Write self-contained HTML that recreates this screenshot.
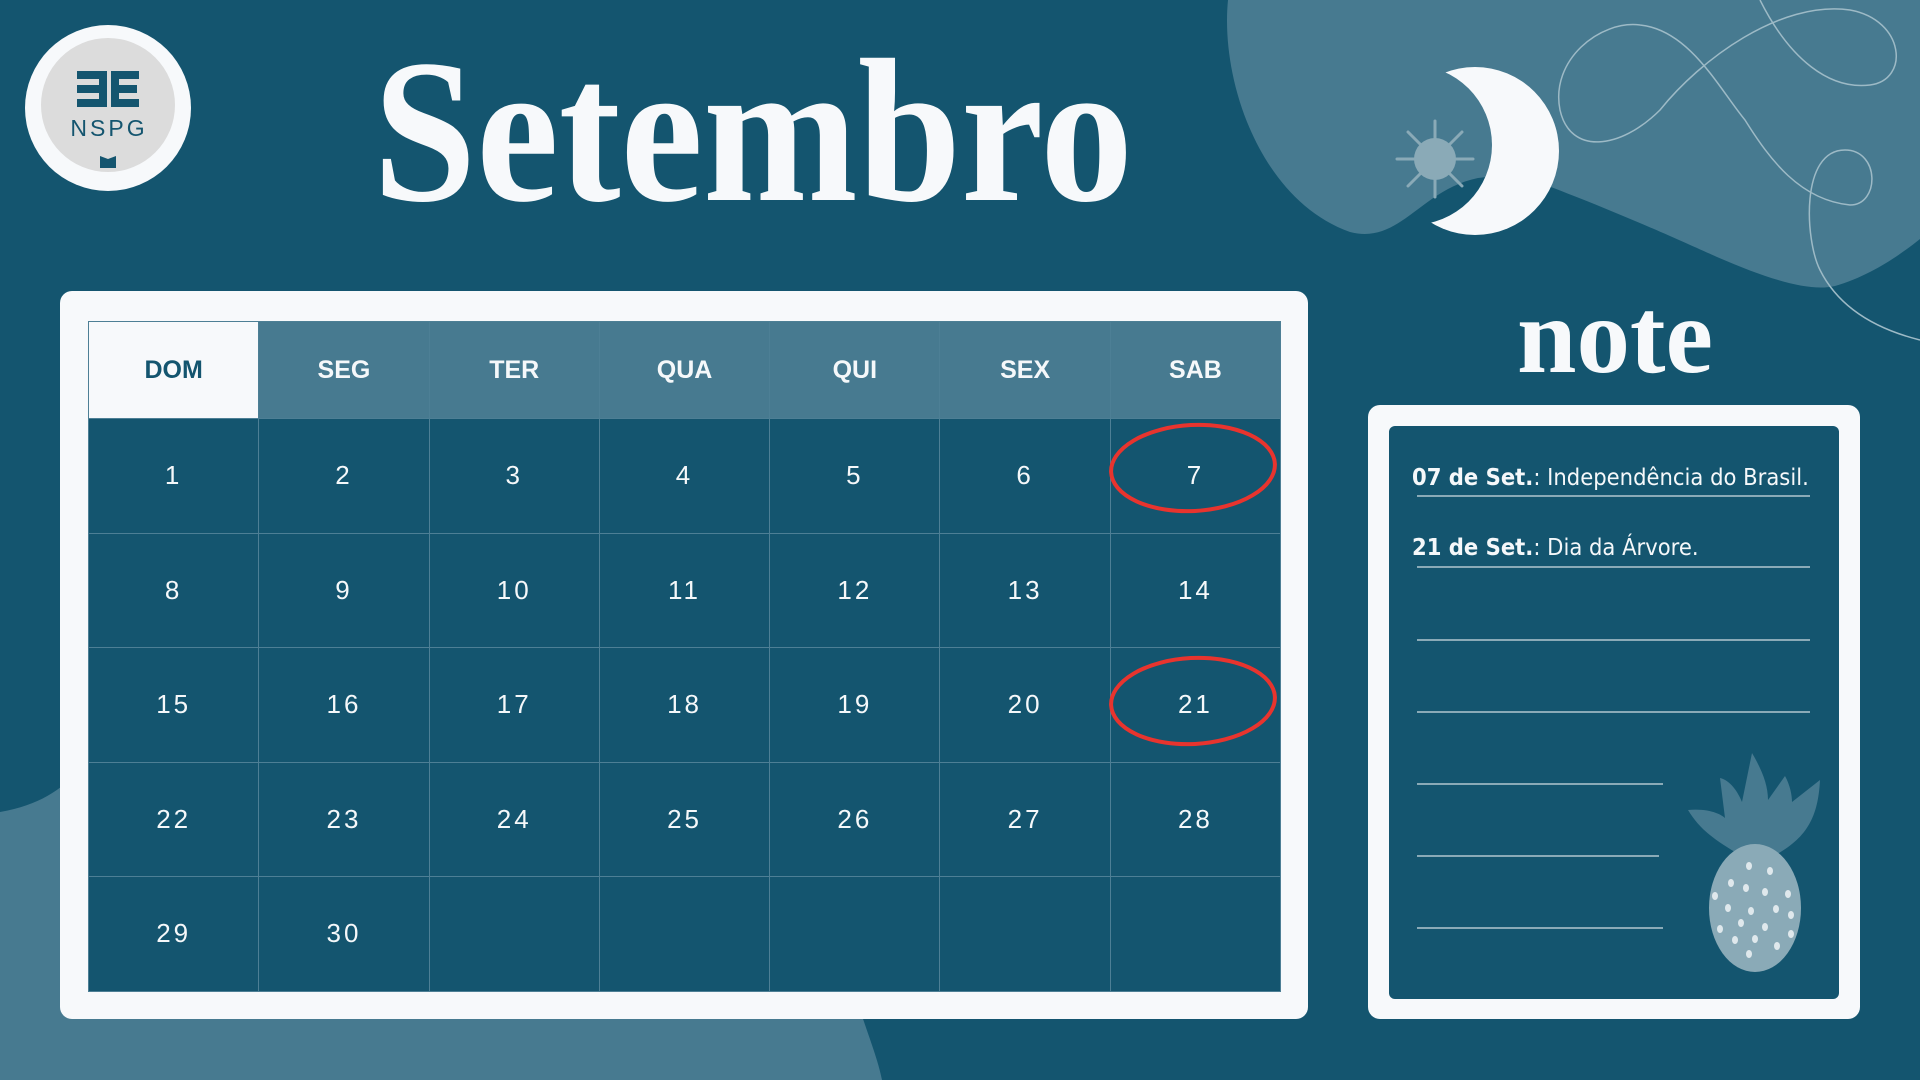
<!DOCTYPE html>
<html><head><meta charset="utf-8"><style>
*{margin:0;padding:0;box-sizing:border-box}
body{width:1920px;height:1080px;overflow:hidden;background:#14556f;position:relative;font-family:"Liberation Sans",sans-serif}
.abs{position:absolute}
#cal{left:60px;top:291px;width:1248px;height:728px;background:#f7f9fb;border-radius:12px}
table{position:absolute;left:88px;top:321px;border-collapse:collapse;table-layout:fixed}
td{width:170.3px;text-align:center;border:1px solid #4d7f95;color:#f5f8fa}
tr.h td{height:97px;background:#477a90;font-weight:bold;font-size:25px}
tr.h td.w{background:#f7f9fb;color:#14556f}
tr.d td{height:114.5px;background:#14556f;font-size:26px;letter-spacing:3px}
#nb{left:1368px;top:405px;width:492px;height:614px;background:#f7f9fb;border-radius:12px}
#ni{left:1389px;top:426px;width:450px;height:573px;background:#14556f;border-radius:6px}
.t{color:#f5f8fa;font-size:23.5px;left:1412px;font-family:"DejaVu Sans Condensed","Liberation Sans",sans-serif}
.ln{height:2px;background:#8aaab7;left:1417px}
</style></head><body>
<svg class="abs" style="left:0;top:0" width="1920" height="1080">
<defs><mask id="m"><rect width="1920" height="400" fill="#fff"/><circle cx="1412" cy="145" r="80" fill="#000"/></mask></defs>
<path d="M1228,0 C1220,80 1260,200 1350,232 C1400,245 1420,190 1478,178 C1520,172 1545,185 1574,196 C1640,222 1690,245 1717,257 C1770,280 1810,292 1835,286 C1870,276 1900,255 1920,239 L1920,0Z" fill="#477a90"/>
<path d="M0,812 C40,805 60,790 80,770 L860,1010 C870,1040 878,1060 882,1080 L0,1080Z" fill="#477a90"/>
<g fill="none" stroke="#9dbac6" stroke-width="1.5">
<path d="M1760,0 C1790,60 1830,90 1870,85 C1910,80 1905,20 1850,10 C1780,0 1700,60 1660,110 C1620,150 1570,155 1560,110 C1550,60 1600,20 1640,25 C1690,30 1720,90 1745,120 C1770,160 1800,200 1850,205 C1880,205 1880,150 1845,150 C1800,150 1805,240 1820,270 C1840,310 1880,330 1920,340"/>
</g>
<g stroke="#8aaab7" stroke-width="3" stroke-linecap="round"><path d="M1397,159 L1473,159 M1435,121 L1435,197 M1408,132 L1462,186 M1462,132 L1408,186"/></g>
<circle cx="1435" cy="159" r="21" fill="#8aaab7"/>
<circle cx="1475" cy="151" r="84" fill="#f7f9fb" mask="url(#m)"/>
<circle cx="108" cy="108" r="83" fill="#f7f9fb"/>
<circle cx="108" cy="105" r="67" fill="#dcdcdc"/>
<g fill="#14556f"><rect x="77" y="71" width="22" height="8"/><rect x="77" y="85" width="22" height="8"/><rect x="77" y="99" width="22" height="8"/><rect x="99" y="71" width="8" height="36"/><rect x="111" y="71" width="8" height="36"/><rect x="119" y="71" width="20" height="8"/><rect x="119" y="85" width="18" height="8"/><rect x="119" y="99" width="20" height="8"/><path d="M100,156 L108,159 L116,156 L116,168 L100,168Z"/></g>
<text x="109" y="136" text-anchor="middle" font-family="Liberation Sans" font-size="23" fill="#14556f" letter-spacing="3">NSPG</text>
<text x="373" y="200" font-family="Liberation Serif" font-weight="bold" font-size="205" fill="#f7f9fb" textLength="760" lengthAdjust="spacingAndGlyphs">Setembro</text>
<text x="1517" y="372" font-family="Liberation Serif" font-weight="bold" font-size="108" fill="#f7f9fb" textLength="196" lengthAdjust="spacingAndGlyphs">note</text>
</svg>
<div id="cal" class="abs"></div>
<table>
<tr class="h"><td class="w">DOM</td><td>SEG</td><td>TER</td><td>QUA</td><td>QUI</td><td>SEX</td><td>SAB</td></tr>
<tr class="d"><td>1</td><td>2</td><td>3</td><td>4</td><td>5</td><td>6</td><td>7</td></tr>
<tr class="d"><td>8</td><td>9</td><td>10</td><td>11</td><td>12</td><td>13</td><td>14</td></tr>
<tr class="d"><td>15</td><td>16</td><td>17</td><td>18</td><td>19</td><td>20</td><td>21</td></tr>
<tr class="d"><td>22</td><td>23</td><td>24</td><td>25</td><td>26</td><td>27</td><td>28</td></tr>
<tr class="d"><td>29</td><td>30</td><td></td><td></td><td></td><td></td><td></td></tr>
</table>
<svg class="abs" style="left:0;top:0" width="1920" height="1080">
<g fill="none" stroke="#e8342e" stroke-width="4"><ellipse cx="1193" cy="468" rx="82" ry="43" transform="rotate(-3 1193 468)"/><ellipse cx="1193" cy="701" rx="82" ry="43" transform="rotate(-3 1193 701)"/></g>
</svg>
<div id="nb" class="abs"></div>
<div id="ni" class="abs"></div>
<div class="abs t" style="top:463px"><b>07 de Set.</b>: Independência do Brasil.</div>
<div class="abs ln" style="top:495px;width:393px"></div>
<div class="abs t" style="top:533px"><b>21 de Set.</b>: Dia da Árvore.</div>
<div class="abs ln" style="top:566px;width:393px"></div>
<div class="abs ln" style="top:639px;width:393px"></div>
<div class="abs ln" style="top:711px;width:393px"></div>
<div class="abs ln" style="top:783px;width:246px"></div>
<div class="abs ln" style="top:855px;width:242px"></div>
<div class="abs ln" style="top:927px;width:246px"></div>
<svg class="abs" style="left:1660px;top:740px" width="180" height="240">
<path d="M28,70 C50,68 62,75 65,78 L60,38 C70,40 78,52 82,62 L92,13 C102,30 108,45 108,60 L125,36 C130,45 132,55 132,62 L160,40 C158,80 145,100 110,118 L80,115 C55,100 40,90 28,70Z" fill="#477a90"/>
<ellipse cx="95" cy="168" rx="46" ry="64" fill="#8aaab7"/>
<g fill="#dfe8ec"><ellipse cx="89" cy="126" rx="3" ry="4"/><ellipse cx="110" cy="131" rx="3" ry="4"/><ellipse cx="71" cy="143" rx="3" ry="4"/><ellipse cx="86" cy="148" rx="3" ry="4"/><ellipse cx="105" cy="152" rx="3" ry="4"/><ellipse cx="128" cy="154" rx="3" ry="4"/><ellipse cx="55" cy="156" rx="3" ry="4"/><ellipse cx="68" cy="168" rx="3" ry="4"/><ellipse cx="91" cy="171" rx="3" ry="4"/><ellipse cx="116" cy="169" rx="3" ry="4"/><ellipse cx="131" cy="175" rx="3" ry="4"/><ellipse cx="81" cy="183" rx="3" ry="4"/><ellipse cx="105" cy="187" rx="3" ry="4"/><ellipse cx="60" cy="189" rx="3" ry="4"/><ellipse cx="75" cy="200" rx="3" ry="4"/><ellipse cx="95" cy="199" rx="3" ry="4"/><ellipse cx="131" cy="194" rx="3" ry="4"/><ellipse cx="117" cy="206" rx="3" ry="4"/><ellipse cx="89" cy="214" rx="3" ry="4"/></g>
</svg>
</body></html>
